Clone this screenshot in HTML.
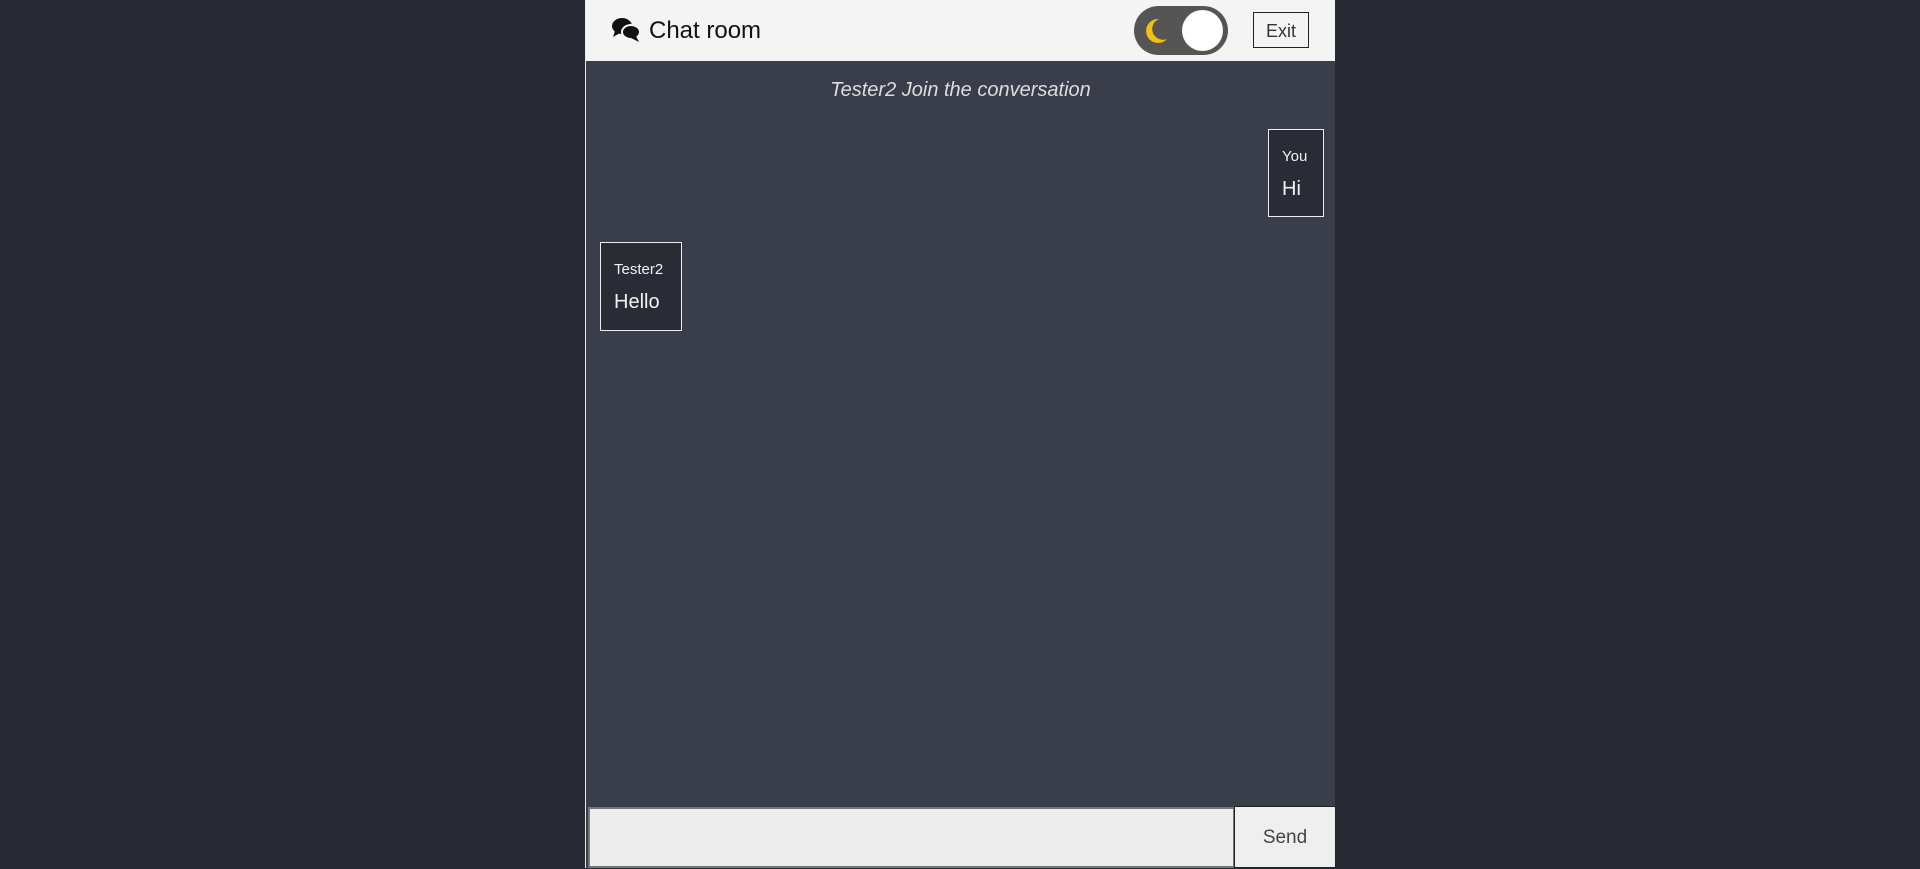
<!DOCTYPE html>
<html><head><style>
*{margin:0;padding:0;box-sizing:border-box}
body{width:1920px;height:868px;background:#282b34;font-family:"Liberation Sans",sans-serif;position:relative;overflow:hidden}
.c{position:absolute;left:585px;top:0;width:750px;height:868px;background:#3a3e4a;border-left:1px solid #e8e8e8}
.h{position:absolute;left:0;top:0;width:749px;height:61px;background:#f4f4f4}
.t{position:absolute;left:63px;top:17px;font-size:24px;color:#111}
.tog{position:absolute;left:548px;top:6px;width:94px;height:49px;border-radius:25px;background:#555}
.knob{position:absolute;right:5px;top:4px;width:41px;height:41px;border-radius:50%;background:#fff}
.exit{position:absolute;left:667px;top:12px;width:56px;height:36px;border:1px solid #222;font-size:18px;color:#333;text-align:center;line-height:36px}
.j{position:absolute;left:0;width:749px;top:79px;text-align:center;font-style:italic;font-size:20px;color:#ddd}
.b{position:absolute;background:#2a2c35;border:1px solid #eee;color:#f2f2f2;padding-left:13px}
.n{position:absolute;left:13px;font-size:15px}
.m{position:absolute;left:13px;font-size:20px}
.in{position:absolute;left:2px;top:807px;width:646px;height:61px;background:#ededed;border:2px solid #777;border-right:1px solid #777}
.s{position:absolute;left:648px;top:806px;width:102px;height:62px;background:#efefef;border:1px solid #222;font-size:19px;color:#444;text-align:center;line-height:62px}
</style></head><body>
<div class="c">
<div class="h">
<svg style="position:absolute;left:25px;top:17px" width="30" height="26" viewBox="0 0 30 26"><ellipse cx="11" cy="9" rx="10" ry="8" fill="#111"/><path d="M4 14 L2 20 L9 16Z" fill="#111"/><ellipse cx="20" cy="15" rx="9" ry="7" fill="#111" stroke="#f4f4f4" stroke-width="2"/><path d="M25 19 L28 25 L20 21Z" fill="#111"/></svg>
<div class="t">Chat room</div>
<div class="tog"><svg style="position:absolute;left:10px;top:12px" width="24" height="26" viewBox="0 0 24 26"><path d="M15 1 A12 12 0 1 0 23 21 A10 10 0 0 1 15 1Z" fill="#f2c012"/></svg><div class="knob"></div></div>
<div class="exit">Exit</div>
</div>
<div class="j">Tester2 Join the conversation</div>
<div class="b" style="left:682px;top:129px;width:56px;height:88px"><div class="n" style="top:18px">You</div><div class="m" style="top:48px">Hi</div></div>
<div class="b" style="left:14px;top:242px;width:82px;height:89px"><div class="n" style="top:18px">Tester2</div><div class="m" style="top:48px">Hello</div></div>
<div class="in"></div>
<div class="s">Send</div>
</div>
</body></html>
